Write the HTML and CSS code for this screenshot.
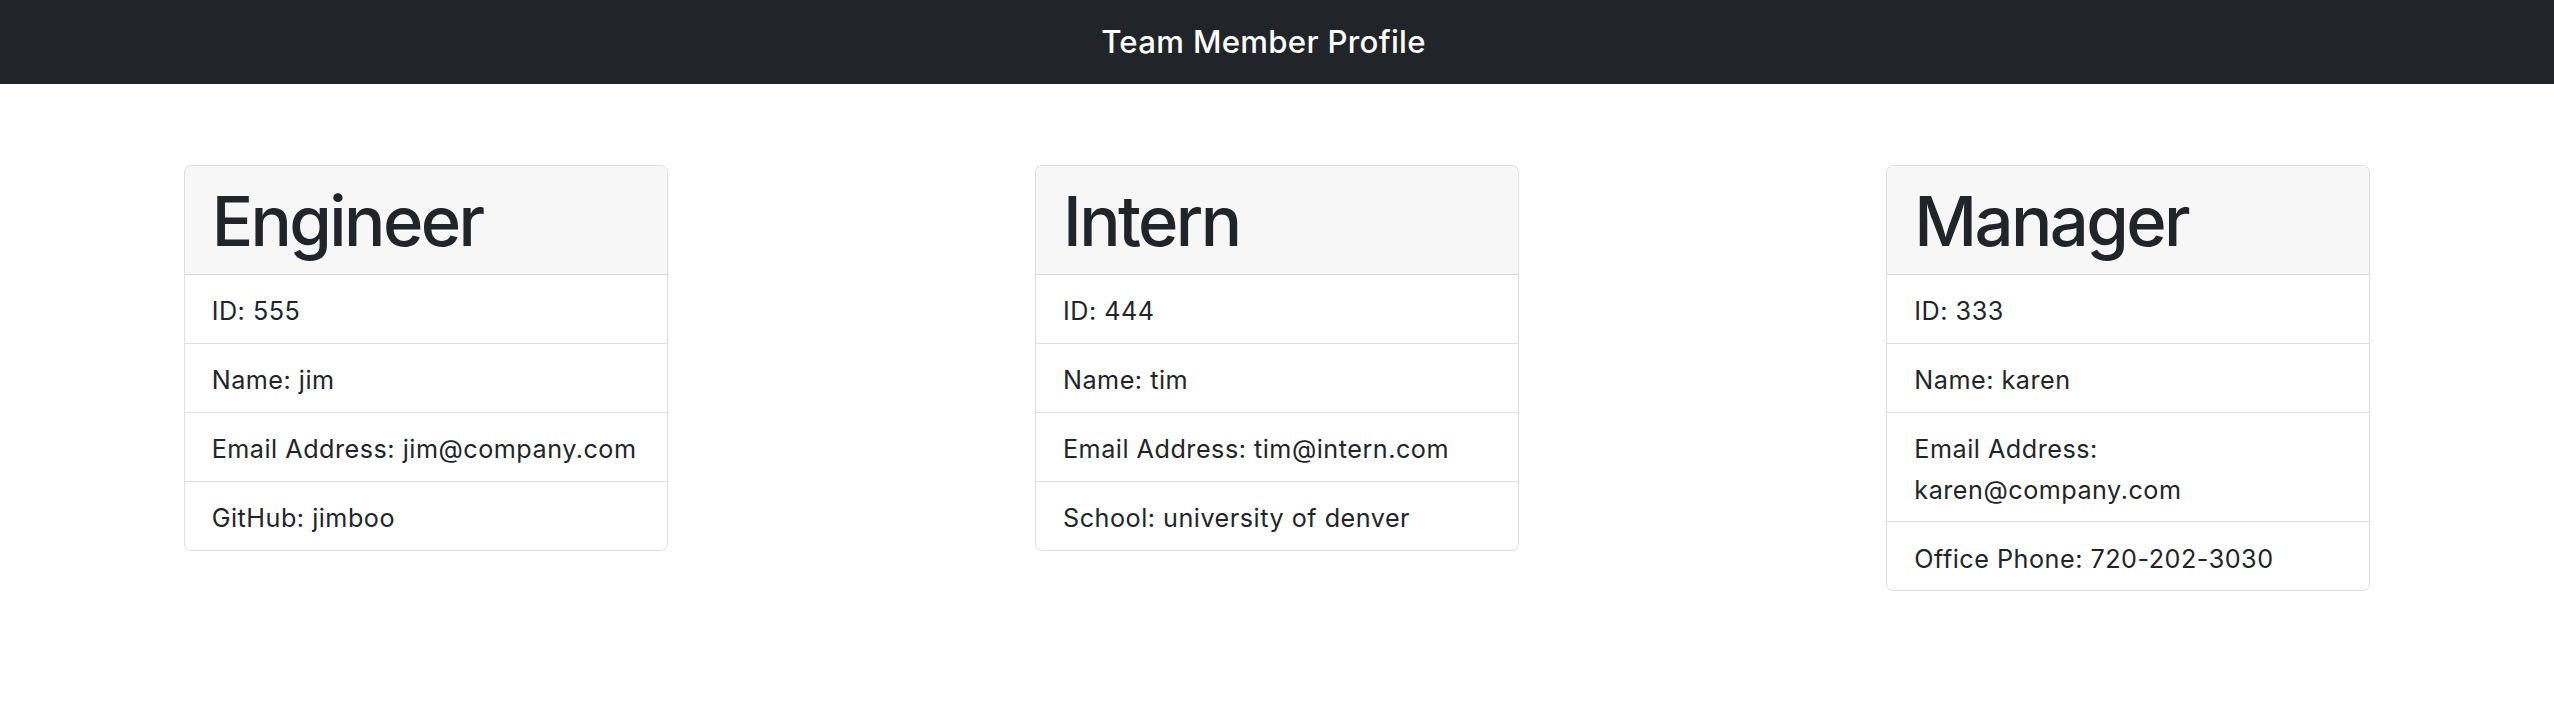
FILE: index.html
```html
<!DOCTYPE html>
<html lang="en">
<head>
<meta charset="utf-8">
<title>Team Member Profile</title>
<link rel="stylesheet" href="styles.css">
</head>
<body>
<nav class="navbar">
  <span class="brand">Team Member Profile</span>
</nav>
<main class="team">
  <div class="col">
    <div class="card">
      <div class="card-header"><h1 class="role">Engineer</h1></div>
      <ul class="info">
        <li class="item">ID: 555</li>
        <li class="item">Name: jim</li>
        <li class="item">Email Address: jim@company.com</li>
        <li class="item">GitHub: jimboo</li>
      </ul>
    </div>
  </div>
  <div class="col">
    <div class="card">
      <div class="card-header"><h1 class="role">Intern</h1></div>
      <ul class="info">
        <li class="item">ID: 444</li>
        <li class="item">Name: tim</li>
        <li class="item">Email Address: tim@intern.com</li>
        <li class="item">School: university of denver</li>
      </ul>
    </div>
  </div>
  <div class="col">
    <div class="card">
      <div class="card-header"><h1 class="role">Manager</h1></div>
      <ul class="info">
        <li class="item">ID: 333</li>
        <li class="item">Name: karen</li>
        <li class="item">Email Address: karen@company.com</li>
        <li class="item">Office Phone: 720-202-3030</li>
      </ul>
    </div>
  </div>
</main>
</body>
</html>
```
FILE: styles.css
```css
* { box-sizing: border-box; }
body {
  margin: 0;
  font-family: Inter, "Noto Sans", "Liberation Sans", sans-serif;
  color: #212529;
  background: #fff;
}
.navbar {
  background: #212529;
  height: 84px;
  display: flex;
  align-items: center;
  justify-content: center;
}
.brand {
  color: #fff;
  font-size: 31.2px;
  font-weight: 500;
  letter-spacing: 0.3px;
  margin-right: 27px;
}
.team {
  display: grid;
  grid-template-columns: repeat(3, 1fr);
  padding-top: 81px;
}
.col {
  display: flex;
  justify-content: center;
  align-items: flex-start;
}
.card {
  width: 484px;
  border: 1px solid rgba(0,0,0,.125);
  border-radius: 7px;
  overflow: hidden;
}
.card-header {
  background: rgba(0,0,0,.03);
  border-bottom: 1px solid rgba(0,0,0,.125);
  padding: 15.3px 27px 11.7px;
}
.role {
  margin: 0;
  font-size: 68.8px;
  font-weight: 500;
  letter-spacing: -2.6px;
  line-height: 80.7px;
}
.info {
  list-style: none;
  margin: 0;
  padding: 0;
}
.item {
  padding: 16.6px 27px 11.1px;
  font-size: 25.2px;
  letter-spacing: 0.5px;
  line-height: 40.3px;
  border-bottom: 1px solid rgba(0,0,0,.125);
}
.item:last-child { border-bottom: 0; }
```
